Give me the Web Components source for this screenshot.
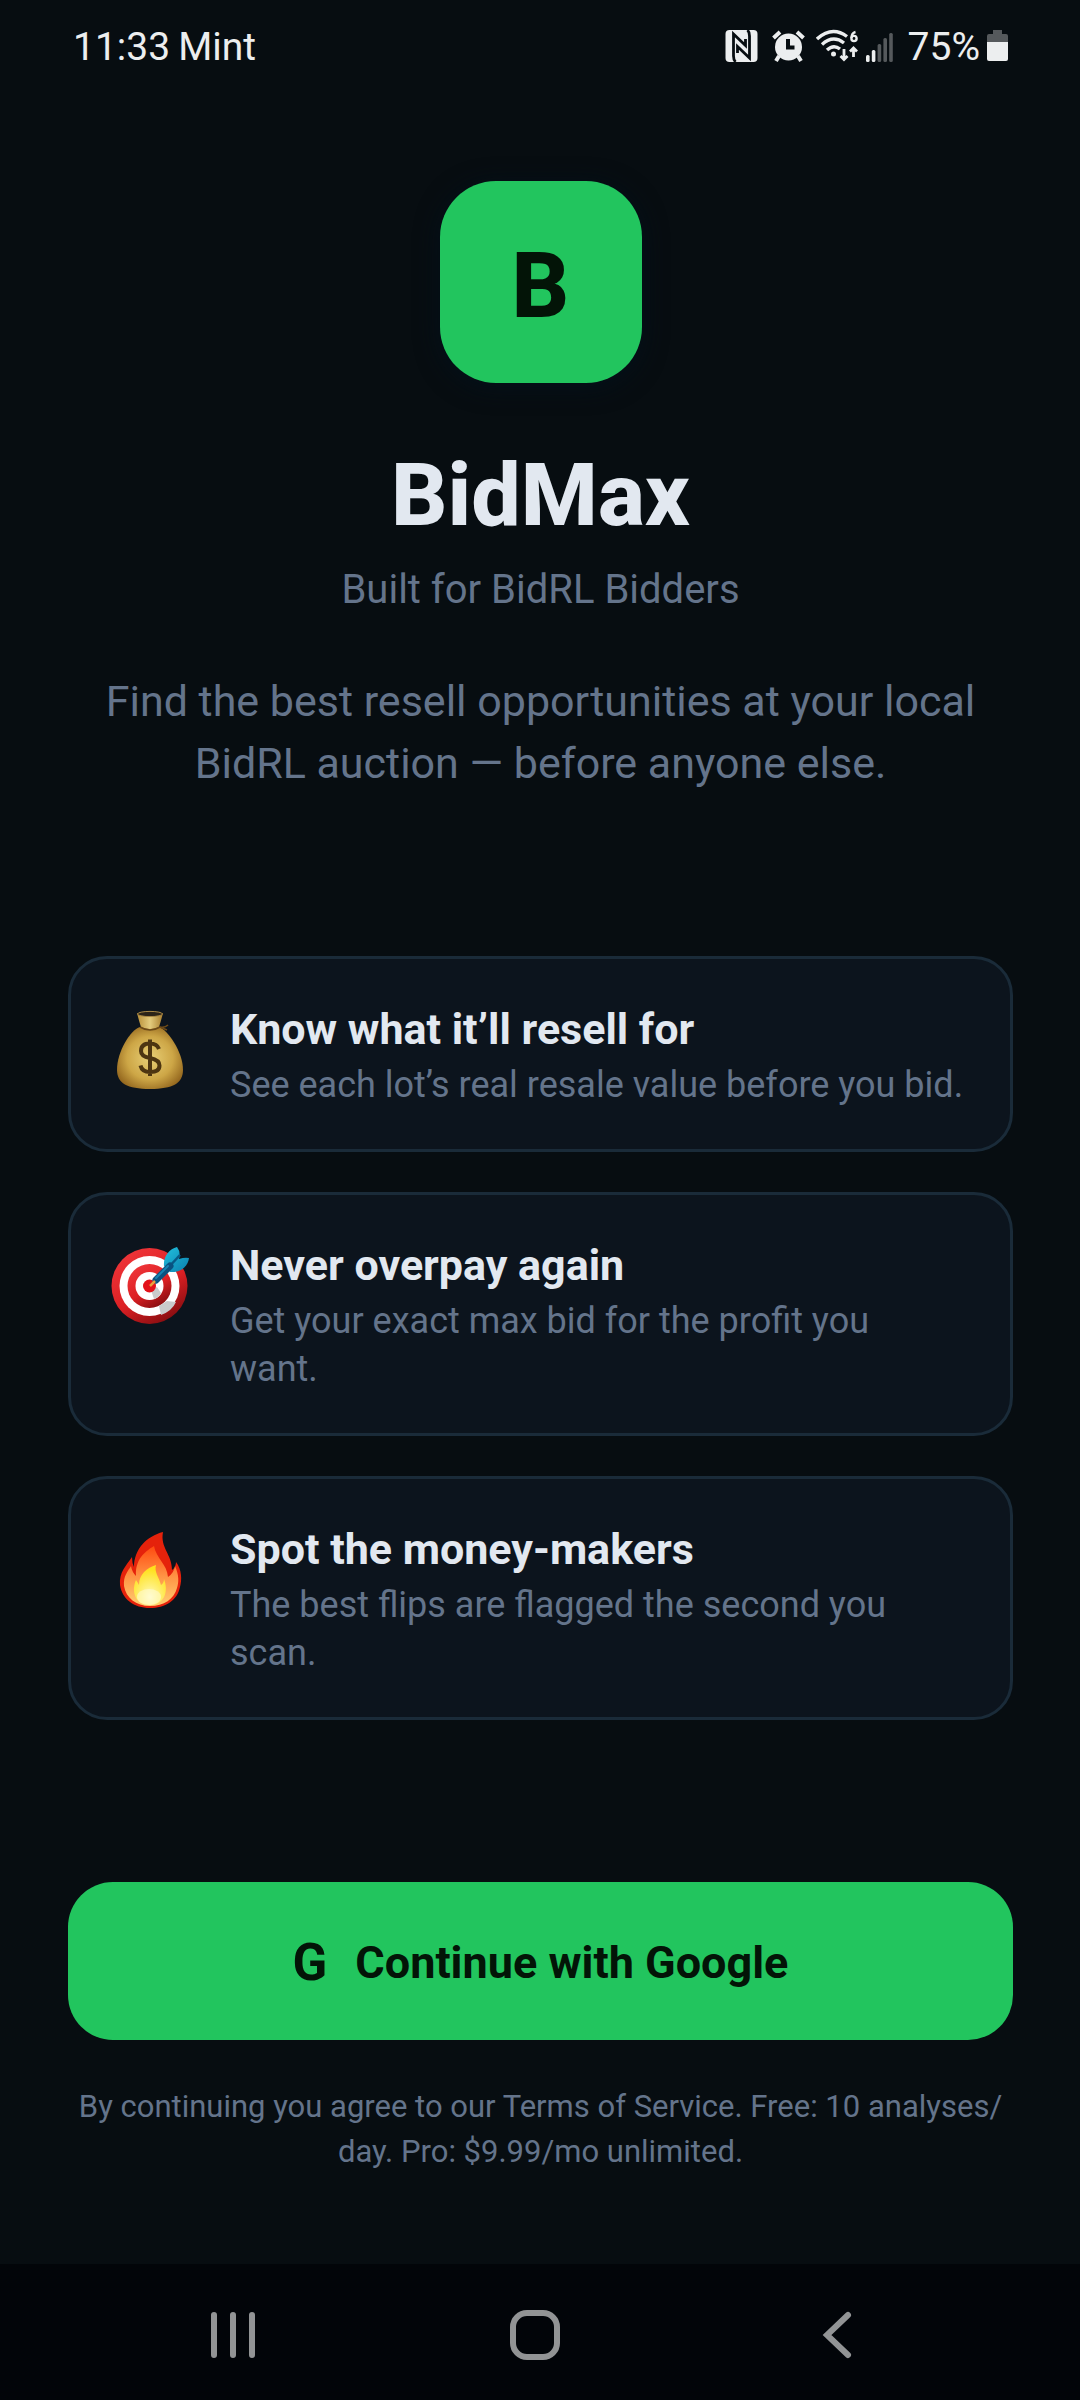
<!DOCTYPE html>
<html lang="en">
<head>
<meta charset="utf-8">
<meta name="viewport" content="width=device-width, initial-scale=1">
<title>BidMax</title>
<style>
  html, body { margin: 0; height: 100%; }
  body {
    background: #070d11;
    color: #e2e8f0;
    font-family: Roboto, "Liberation Sans", sans-serif;
  }
</style>
</head>
<body>
<bm-screen>
  <bm-status-bar slot="status" time="11:33" carrier="Mint" battery="75%"></bm-status-bar>
  <bm-hero letter="B">
    <span slot="name">BidMax</span>
    <span slot="tagline">Built for BidRL Bidders</span>
    <span slot="pitch">Find the best resell opportunities at your local BidRL auction — before anyone else.</span>
  </bm-hero>
  <bm-feature-list>
    <bm-feature icon="bag"><span slot="title">Know what it’ll resell for</span>See each lot’s real resale value before you bid.</bm-feature>
    <bm-feature icon="target"><span slot="title">Never overpay again</span>Get your exact max bid for the profit you<br>want.</bm-feature>
    <bm-feature icon="flame"><span slot="title">Spot the money-makers</span>The best flips are flagged the second you<br>scan.</bm-feature>
  </bm-feature-list>
  <bm-sign-in mark="G">Continue with Google<span slot="terms">By continuing you agree to our Terms of Service. Free: 10 analyses/<wbr>day. Pro: $9.99/mo unlimited.</span></bm-sign-in>
  <bm-nav-bar slot="nav"></bm-nav-bar>
</bm-screen>

<script>
class BaseElement extends HTMLElement {
  connectedCallback() {
    if (this.shadowRoot) return;
    this.attachShadow({ mode: "open" }).innerHTML = this.render();
  }
  attr(name) { return this.getAttribute(name) || ""; }
}

customElements.define("bm-screen", class extends BaseElement {
  render() {
    return `<style>
      :host { display: flex; flex-direction: column; min-height: 100vh; }
      main { flex: 1; display: flex; flex-direction: column; padding: 89px 67px 0 68px; }
    </style>
    <slot name="status"></slot>
    <main><slot></slot></main>
    <slot name="nav"></slot>`;
  }
});

customElements.define("bm-status-bar", class extends BaseElement {
  render() {
    return `<style>
      :host { display: flex; justify-content: space-between; align-items: center;
        height: 92px; padding: 0 72px 0 73px; color: #eceeef; font-size: 39px; line-height: 46px; }
      div { display: flex; align-items: center; gap: 8px; }
      span { padding-top: 2px; }
      svg { display: block; }
      .icons { gap: 7px; }
      .nfc { margin-right: 7px; }
      .alarm { margin-right: 4px; }
      .signal { margin-right: 8px; }
    </style>
    <div><span>${this.attr("time")}</span><span>${this.attr("carrier")}</span></div>
    <div class="icons">
      <svg class="nfc" width="33" height="34" viewBox="0 0 33 34" aria-label="NFC">
        <rect x="0.500" y="1" width="32" height="32" rx="4" fill="#eceeef"/>
        <path d="M10.500 33Q8.500 31 8.500 27V5L20.500 16.500V10M22.500 1Q24.500 3 24.500 7V29L12.500 17.500V24" fill="none" stroke="#070d11" stroke-width="2.800"/>
      </svg>
      <svg class="alarm" width="33" height="34" viewBox="0 0 33 34" aria-label="Alarm">
        <circle cx="16.500" cy="18" r="13.500" fill="#eceeef"/>
        <path d="M1.500 9L8 3M31.500 9L25 3" stroke="#eceeef" stroke-width="4"/>
        <path d="M7 27L4 32M26 27L29 32" stroke="#eceeef" stroke-width="4"/>
        <path d="M16 10V18.500H22.500" fill="none" stroke="#070d11" stroke-width="4"/>
      </svg>
      <svg width="43" height="34" viewBox="0 0 43 34" aria-label="Wi-Fi 6">
        <g fill="none" stroke="#eceeef" stroke-width="3.400">
          <path d="M1 10Q16 -3.500 31 7.500"/><path d="M6 15.500Q17 5.500 28 14"/><path d="M11 21Q17.500 15 24 20"/>
          <path d="M28 20V30M24.500 27L28 30.500L31.500 27" stroke-width="2.800"/>
          <path d="M37.500 28V19M34 22.500L37.500 19L41 22.500" stroke-width="2.800"/>
          <path d="M39.500 3Q35.500 4 35.500 9" stroke-width="2.400"/><circle cx="38" cy="9.500" r="2.600" stroke-width="2.400"/>
        </g>
        <circle cx="17.500" cy="25" r="2.500" fill="#eceeef"/>
      </svg>
      <svg class="signal" width="27" height="34" viewBox="0 0 27 34" aria-label="Signal">
        <g fill="#eceeef"><rect y="26" width="3.600" height="7" rx="1.500"/><rect x="5.800" y="21" width="3.600" height="12" rx="1.500"/></g>
        <g fill="#55595c"><rect x="11.600" y="15" width="3.600" height="18" rx="1.500"/><rect x="17.400" y="9" width="3.600" height="24" rx="1.500"/><rect x="23.200" y="4" width="3.600" height="29" rx="1.500"/></g>
      </svg>
      <span>${this.attr("battery")}</span>
      <svg width="21" height="34" viewBox="0 0 21 34" aria-label="Battery">
        <path d="M6 1H15V5H19Q21 5 21 7V13H0V7Q0 5 2 5H6Z" fill="#55595c"/>
        <path d="M0 13H21V30Q21 32 19 32H2Q0 32 0 30Z" fill="#eceeef"/>
      </svg>
    </div>`;
  }
});

customElements.define("bm-hero", class extends BaseElement {
  render() {
    return `<style>
      :host { display: flex; flex-direction: column; align-items: center; text-align: center; }
      .logo { display: flex; align-items: center; justify-content: center; width: 202px; height: 202px;
        box-sizing: border-box; padding-top: 10px;
        border-radius: 56px; background: #22c55e; color: #031407; font-size: 90px; line-height: 106px; font-weight: 800;
        box-shadow: 0 4px 24px #04101a; }
      h1 { margin: 59px 0 0; font-size: 88px; line-height: 106px; font-weight: 800; color: #e2e8f0; }
      p { margin: 0; color: #64748b; }
      .tagline { margin-top: 19px; font-size: 40px; line-height: 46px; }
      .pitch { margin-top: 57px; font-size: 43px; line-height: 62px; }
    </style>
    <div class="logo">${this.attr("letter")}</div>
    <h1><slot name="name"></slot></h1>
    <p class="tagline"><slot name="tagline"></slot></p>
    <p class="pitch"><slot name="pitch"></slot></p>`;
  }
});

customElements.define("bm-feature-list", class extends BaseElement {
  render() {
    return `<style>
      :host { display: flex; flex-direction: column; gap: 40px; margin-top: 162px; }
    </style><slot></slot>`;
  }
});

const ICONS = {
  bag: `
    <defs>
      <radialGradient id="sack" cx="0.5" cy="0.5" r="0.58"><stop offset="0" stop-color="#e8cf76"/><stop offset="0.6" stop-color="#cda646"/><stop offset="1" stop-color="#92651d"/></radialGradient>
      <linearGradient id="neck"><stop offset="0" stop-color="#b98f38"/><stop offset="0.5" stop-color="#e3cb7d"/><stop offset="1" stop-color="#a87d2d"/></linearGradient>
    </defs>
    <path d="M30 17C20 20 7 42 7 60C7 73 17 79 40 79C63 79 73 73 73 60C73 42 58 20 49 17Z" fill="url(#sack)"/>
    <path d="M27 3Q40 8 53 3Q51 11 49 17Q40 21 31 17Q29 11 27 3Z" fill="url(#neck)"/>
    <ellipse cx="40" cy="4" rx="12.500" ry="2.600" fill="#2b2318" stroke="#a98845" stroke-width="1"/>
    <path d="M30 17Q40 23 50 17Q55 18 58 15M50 17L57 20" fill="none" stroke="#6d4a18" stroke-width="1.600"/>
    <path d="M49 39Q47 33.500 40 33.500Q31 33.500 31 41Q31 46.500 40 48Q49.500 50 49.500 55.500Q49.500 62 40 62Q32 62 30.500 55.500M40 29.500V66" fill="none" stroke="#4d3511" stroke-width="4"/>`,
  target: `
    <defs>
      <linearGradient id="ring" x1="0.2" y1="0" x2="0.8" y2="1"><stop offset="0" stop-color="#f0363a"/><stop offset="0.55" stop-color="#dc2024"/><stop offset="1" stop-color="#7d0b0e"/></linearGradient>
      <linearGradient id="fin" x1="0" y1="0" x2="1" y2="1"><stop offset="0" stop-color="#22c0dd"/><stop offset="1" stop-color="#0a7fae"/></linearGradient>
    </defs>
    <circle cx="39.500" cy="40" r="38" fill="url(#ring)"/>
    <circle cx="39.500" cy="40" r="30" fill="#fff"/>
    <circle cx="39.500" cy="40" r="22" fill="url(#ring)"/>
    <circle cx="39.500" cy="40" r="14" fill="#fff"/>
    <path d="M41 44L47 41L51 47Q48 52 44 53Z M49 60L57 55L66 56Q62 65 51 69Z" fill="#c9cbcc"/>
    <circle cx="39.500" cy="40" r="6.500" fill="#e3121a"/>
    <path d="M54 20C53 11 59 3 67 1Q71 6 69 13Q75 11 79 12C78 21 70 27 60 26Z" fill="url(#fin)"/>
    <path d="M70 9L57 23" stroke="#075a86" stroke-width="2.500"/>
    <path d="M60 20L46 34" stroke="#0a5280" stroke-width="7" stroke-linecap="round"/>
    <path d="M58 20L46 32" stroke="#1683b1" stroke-width="2" stroke-linecap="round"/>
    <path d="M45 35L40 40" stroke="#e9a13b" stroke-width="2.500"/>`,
  flame: `
    <defs>
      <linearGradient id="mid" x1="0" y1="0" x2="0" y2="1"><stop offset="0" stop-color="#ff4a10"/><stop offset="0.5" stop-color="#ff9244"/><stop offset="1" stop-color="#ffd070"/></linearGradient>
      <radialGradient id="core" cx="0.5" cy="0.8" r="0.7"><stop offset="0" stop-color="#fffbd0"/><stop offset="0.4" stop-color="#fff07a"/><stop offset="1" stop-color="#ffe11c"/></radialGradient>
    </defs>
    <path d="M53 2C50 18 62 24 62 40Q66 37 66 32C72 40 72 50 70 57C67 71 55 78 40 78C24 78 12 69 10 55C9 42 16 36 22 27Q22 33 24 37C24 19 37 6 53 2Z" fill="#e5220b"/>
    <path d="M44 16C46 28 57 34 58 47Q64 43 65 36C69 45 69 52 67 58C64 69 54 76 40 76C26 76 16 68 14 56C13 46 18 41 21 36Q22 42 26 46C25 30 34 22 44 16Z" fill="url(#mid)"/>
    <path d="M46 35C44 42 49 47 51 55Q54 53 54 49C59 62 54 75 40 75C25 75 21 61 26 50Q28 53 29 55C29 44 37 38 46 35Z" fill="url(#core)"/>
    <ellipse cx="39" cy="67" rx="12" ry="8" fill="#fffbd0" opacity="0.600"/>`
};

customElements.define("bm-feature", class extends BaseElement {
  render() {
    return `<style>
      :host { display: flex; align-items: flex-start; gap: 40px; padding: 45px 39px 40px;
        border: 3px solid #1a2b39; border-radius: 39px; background: #0c141d; }
      svg { flex: none; margin-top: 6px; }
      h2 { margin: 0 0 7px; font-size: 43px; line-height: 50px; font-weight: 700; color: #e2e8f0; }
      p { margin: 0; font-size: 36px; line-height: 48px; color: #64748b; }
    </style>
    <svg width="80" height="80" viewBox="0 0 80 80" aria-hidden="true">${ICONS[this.attr("icon")]}</svg>
    <div><h2><slot name="title"></slot></h2><p><slot></slot></p></div>`;
  }
});

customElements.define("bm-sign-in", class extends BaseElement {
  render() {
    return `<style>
      :host { display: flex; flex-direction: column; margin-top: 162px; }
      button { display: flex; align-items: center; justify-content: center; gap: 28px; height: 158px;
        border: 0; border-radius: 45px; padding: 2px 0 0; background: #22c55e; color: #031407;
        font: 700 45px/53px Roboto, "Liberation Sans", sans-serif; }
      b { font-size: 51px; font-weight: 700; }
      p { margin: 44px 0 0; font-size: 31px; line-height: 45px; color: #64748b; text-align: center; }
    </style>
    <button type="button"><b>${this.attr("mark")}</b><span><slot></slot></span></button>
    <p><slot name="terms"></slot></p>`;
  }
});

customElements.define("bm-nav-bar", class extends BaseElement {
  render() {
    return `<style>
      :host { display: flex; align-items: center; justify-content: center; gap: 216px; box-sizing: border-box; height: 136px;
        padding: 6px 10px 0 0; background: #020509; }
      button { display: flex; justify-content: center; border: 0; padding: 6px 8px; width: 86px; background: none; }
      svg { fill: none; stroke: #929495; stroke-width: 6; stroke-linecap: round; stroke-linejoin: round; }
    </style>
    <button type="button" aria-label="Recent apps"><svg width="50" height="52" viewBox="0 0 50 52"><path d="M6 6V46M25 6V46M44 6V46"/></svg></button>
    <button type="button" aria-label="Home"><svg width="50" height="52" viewBox="0 0 50 52"><rect x="3" y="4" width="44" height="44" rx="14"/></svg></button>
    <button type="button" aria-label="Back"><svg width="50" height="52" viewBox="0 0 50 52"><path d="M36 6L15 26L36 46" stroke-linejoin="miter"/></svg></button>`;
  }
});
</script>
</body>
</html>
